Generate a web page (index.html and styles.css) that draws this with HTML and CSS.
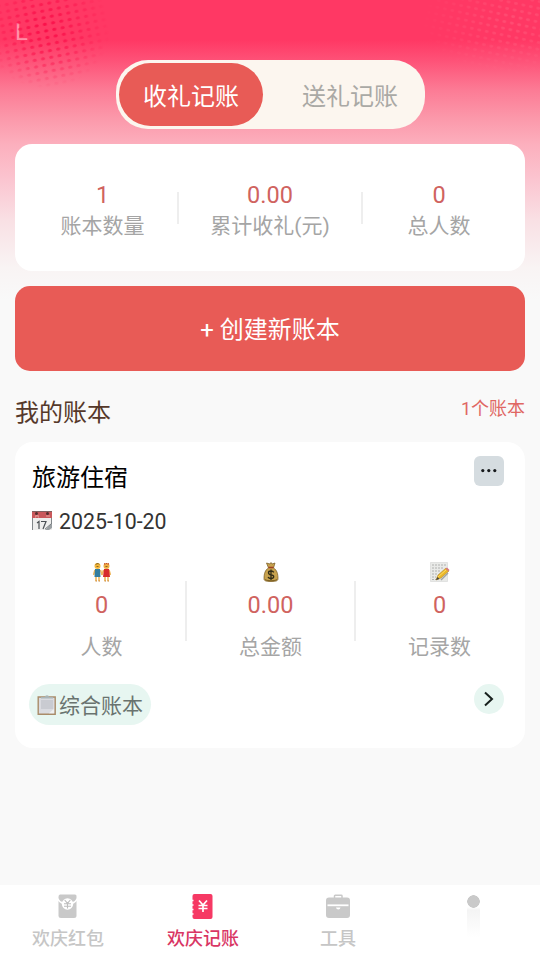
FILE: index.html
```
<!DOCTYPE html>
<html lang="zh-CN">
<head>
<meta charset="utf-8">
<title>欢庆记账</title>
<link rel="stylesheet" href="styles.css">
</head>
<body>
<div class="app">
  <svg class="halftone" width="540" height="110" aria-hidden="true">
    <defs>
      <pattern id="dots" width="8.4" height="6.7" patternUnits="userSpaceOnUse" patternTransform="translate(2 2) rotate(-11)"><ellipse cx="4.2" cy="3.3" rx="2.1" ry="1.6" fill="#fa0f49"/></pattern>
      <pattern id="lightDots" width="7.6" height="6.7" patternUnits="userSpaceOnUse" patternTransform="rotate(12)"><ellipse cx="3.8" cy="3.3" rx="2" ry="1.4" fill="#ff7791"/></pattern>
      <radialGradient id="fade"><stop offset="0" stop-color="#fff"/><stop offset=".35" stop-color="#fff" stop-opacity=".7"/><stop offset="1" stop-color="#fff" stop-opacity="0"/></radialGradient>
      <mask id="leftMask"><ellipse cx="46" cy="28" rx="64" ry="60" fill="url(#fade)"/></mask>
      <mask id="rightMask"><ellipse cx="515" cy="22" rx="95" ry="58" fill="url(#fade)"/></mask>
    </defs>
    <rect width="120" height="100" fill="url(#dots)" mask="url(#leftMask)"/>
    <rect x="400" width="140" height="90" fill="url(#lightDots)" opacity=".35" mask="url(#rightMask)"/>
  </svg>

  <header class="header"><span class="back">L</span></header>

  <main class="content">
    <nav class="switch">
      <span class="switch-item active">收礼记账</span>
      <span class="switch-item">送礼记账</span>
    </nav>

    <section class="summary">
      <div class="summary-item"><b class="num">1</b><span class="label">账本数量</span></div>
      <div class="summary-item"><b class="num">0.00</b><span class="label">累计收礼(元)</span></div>
      <div class="summary-item"><b class="num">0</b><span class="label">总人数</span></div>
    </section>

    <div class="create">+ 创建新账本</div>

    <div class="section-head"><h2>我的账本</h2><span class="count">1个账本</span></div>

    <article class="book">
      <div class="book-top">
        <h3>旅游住宿</h3>
        <span class="more"><svg width="30" height="30" viewBox="0 0 30 30" fill="#16191b"><circle cx="8.8" cy="14.6" r="1.6"/><circle cx="14.8" cy="14.6" r="1.6"/><circle cx="20.8" cy="14.6" r="1.6"/></svg></span>
      </div>
      <div class="date">
        <svg width="20" height="20" viewBox="0 0 20 20"><path fill="#eeeeed" d="M0 0h20v19H0z"/><path fill="#c9585b" d="M0 0h20v7H0z"/><path d="M0 .5h20" stroke="#806160"/><path d="M3 6h1V4h2v2h1M14 5h4" stroke="#e7a19d" fill="none"/><circle cx="4.500" cy="2.500" r="1.500" fill="#542c2d"/><circle cx="15.500" cy="2.500" r="1.500" fill="#542c2d"/><path d="M5 12l2-1.500V18M9 10.500h5l-3 7.500" fill="none" stroke="#4b5054" stroke-width="1.200"/><path d="M13 19l7-7v5l-3 2z" fill="#9a9fa2"/><path d="M13 18l6-5M.5 7v12M19.500 7v6" stroke="#666c70" stroke-width=".8"/></svg>
        <span>2025-10-20</span>
      </div>
      <div class="metrics">
        <div class="metric">
          <svg width="18" height="20" viewBox="0 0 18 20"><path d="M3 14v5M6 14v5M12 14v5M15 14v5M2 8L.5 13M7.500 8L9 13M10.500 8L9 13M16 8l1.500 5" stroke="#efb75b" stroke-width="1.600"/><circle cx="4.500" cy="4" r="3" fill="#f4b83d"/><circle cx="13.500" cy="4" r="3" fill="#f0b043"/><path d="M2 3q2.500-4 5 0l-2-1z" fill="#8c681f"/><path d="M11 2.500V1l1.500 1 1-1 1 1L16 1v1.500l-2.500-.5z" fill="#b52b20"/><path d="M2 7h5l.5 8h-6z" fill="#347e9f"/><path d="M11 7h5l1 8h-7z" fill="#d72b2a"/><path d="M3.500 4.500h2M12.500 4.500h2" stroke="#71501b" stroke-width=".8"/><path d="M2.500 19H4M5.500 19H7M11.500 19H13M14.500 19H16" stroke="#c98535"/></svg>
          <b class="num">0</b><span class="label">人数</span>
        </div>
        <div class="metric">
          <svg width="18" height="20" viewBox="0 0 18 20"><path d="M4.500 1l3.500 1 1-1.500 1 1.500 3-1-1.500 5c3.500 2 4.500 6 4.500 10.500 0 2-1 3-7 3s-7-1-7-3C2 12 3 8 6.500 6z" fill="#c7a24e" stroke="#75571e" stroke-width=".7"/><path d="M6.500 5.500h5" stroke="#9f3e22" stroke-width="1.500"/><path d="M3 17.500q1 1.200 6 1.200 5 0 6-1.200" stroke="#806324" fill="none"/><path d="M11.800 10.300Q11 9 9 9q-2.500 0-2.500 1.700T9 12.800q2.700.3 2.700 2T9 16.500q-2.200 0-3-1.500M9 7.500v10.500" fill="none" stroke="#302b15" stroke-width="1.300"/></svg>
          <b class="num">0.00</b><span class="label">总金额</span>
        </div>
        <div class="metric">
          <svg width="20" height="20" viewBox="0 0 20 20"><path fill="#e9eae8" stroke="#d3d5d3" stroke-width=".6" d="M.5.5h17v19H.5z"/><path d="M2 3h14M2 6h12M2 9h9M2 12h6M2 15h4M2 17.500h4" stroke="#a1a3a2" stroke-width=".8" stroke-dasharray="2 1"/><path d="M6 18l2-5 8-7 3 3-8 7z" fill="#e9b729" stroke="#a47626" stroke-width=".5"/><path d="M8 15l8-7" stroke="#ffdc64"/><path d="M15.500 6.500L17 5.500l2.500 2.500-1 1.500z" fill="#d67780"/><path d="M6 18l1.500-3 2 2z" fill="#45433d"/><path d="M11 18l7-7" stroke="#a1a4a2" stroke-width="1.500"/></svg>
          <b class="num">0</b><span class="label">记录数</span>
        </div>
      </div>
      <div class="book-foot">
        <span class="tag"><svg width="20" height="22" viewBox="0 0 20 22"><path fill="#dadbe0" stroke="#a98c69" stroke-width="1.400" d="M1.200 3h17v17.300h-17z"/><path fill="#c9cbd1" d="M4 6h12v9H4z"/><path fill="#eef0f0" d="M12 19.300l5-4.500v4.500z"/><path d="M4 4.500V3h4q0-1.800 2-1.800T12 3h4v1.500z" fill="#aab5b7"/></svg><span class="tag-text">综合账本</span></span>
        <span class="go"><svg width="30" height="30" viewBox="0 0 30 30" fill="none" stroke="#17201d" stroke-width="2"><path d="M11 8.500l7 6.500-7 6.500"/></svg></span>
      </div>
    </article>
  </main>

  <footer class="tabbar">
    <div class="tab">
      <svg width="28" height="28" viewBox="0 0 28 28"><path fill="#c9c9c9" d="M6 1.500h15q1.500 0 1.500 1.500v19.500q0 2.500-2.500 2.500H7q-2.500 0-2.500-2.500V4q0-2.500 1.500-2.500z"/><path d="M3.500 5.500q2 4 6 5M23.500 5.500q-2 4-6 5" fill="none" stroke="#fff" stroke-width="1.600"/><circle cx="13.500" cy="11" r="5.700" fill="#fff"/><path d="M10.700 7l2.800 3.300L16.300 7M10 10.800h7M10 13.200h7M13.500 10.500v5" fill="none" stroke="#bdbdbd" stroke-width="1.100"/></svg>
      <span>欢庆红包</span>
    </div>
    <div class="tab current">
      <svg width="28" height="28" viewBox="0 0 28 28"><path fill="#f63964" d="M5.500 1h16q2 0 2 2v21q0 2-2 2h-16q-2 0-2-2V3q0-2 2-2z"/><path d="M2.500 7.500h2M2.500 12h2M2.500 16.500h2M2.500 21h2" stroke="#fff" stroke-width="1.300"/><path d="M10 7.500l4 4.500 4-4.500M9.500 12.500h9M9.500 15.500h9M14 12v7" fill="none" stroke="#fff" stroke-width="1.700"/></svg>
      <span>欢庆记账</span>
    </div>
    <div class="tab">
      <svg width="28" height="28" viewBox="0 0 28 28"><path fill="none" stroke="#c9c9c9" stroke-width="1.500" d="M10.500 5V3q0-.7.700-.7h6.100q.7 0 .7.700v2"/><rect x="2" y="4.500" width="24" height="20.500" rx="3" fill="#c9c9c9"/><path d="M3.500 12.300h21" stroke="#fff" stroke-width="1.800"/><path d="M12 14.500h4.500q-.4 2-2.200 2-1.900 0-2.300-2z" fill="#fff"/></svg>
      <span>工具</span>
    </div>
    <div class="tab">
      <div class="profile"></div>
    </div>
  </footer>
</div>
</body>
</html>
```

FILE: styles.css
```
* { box-sizing: border-box; }
body {
  margin: 0;
  font-family: Roboto, "Noto Sans CJK SC", sans-serif;
  font-weight: 400;
}
svg { display: block; flex: none; }
.app {
  position: relative;
  width: 540px;
  height: 960px;
  display: flex;
  flex-direction: column;
  overflow: hidden;
  background: #f9f9f9 linear-gradient(#ff3864 0, #ff3864 40px, #fe5177 60px, #fc7b95 90px, #fb98aa 118px, #fcafbd 144px, #fbc5d0 180px, #f9e0e4 220px, #f9f4f4 268px, #f9f9f9 300px) no-repeat;
}
.halftone { position: absolute; left: 0; top: 0; }
.header { height: 60px; padding: 17px 0 0 15px; }
.back {
  display: block;
  font: 400 24px/30px Roboto, sans-serif;
  color: rgba(255, 255, 255, .45);
}
.content { position: relative; flex: 1; padding: 0 15px; }

.switch {
  display: flex;
  width: 309px;
  height: 69px;
  margin: 0 auto 15px 101px;
  padding: 3px;
  border-radius: 32px;
  background: #fcf6ef;
}
.switch-item {
  flex: 1;
  padding-left: 15px;
  text-align: center;
  font-size: 24px;
  line-height: 68px;
  color: #aaa9a5;
}
.switch-item.active {
  flex: 0 0 144px;
  height: 63px;
  padding: 0;
  border-radius: 32px;
  background: #e85b56;
  color: #fff;
}
.summary {
  display: grid;
  grid-template-columns: 151px 184px 149px;
  height: 127px;
  padding: 35px 12px 0 13px;
  border-radius: 17px;
  background: #fff;
}
.summary-item, .metric { display: flex; flex-direction: column; align-items: center; }
.summary-item { padding-right: 2px; }
.summary-item:last-child { padding: 0 0 0 3px; }
.num { font-size: 23.5px; font-weight: 400; line-height: 32px; color: #d0635f; }
.label { font-size: 21px; line-height: 30px; color: #a5a5a5; white-space: nowrap; }
.summary-item:not(:last-child) {
  background: linear-gradient(#eee, #eee) right 13px / 2px 32px no-repeat;
}
.create {
  height: 85px;
  margin-top: 15px;
  border-radius: 15px;
  background: #e85b56;
  color: #fff;
  font-size: 24px;
  line-height: 89px;
  text-align: center;
}
.section-head { display: flex; justify-content: space-between; height: 71px; padding-top: 24px; }
h2, h3 { margin: 0; font-size: 24px; font-weight: 400; line-height: 36px; }
h2 { color: #55382a; }
.count { font-size: 18px; line-height: 27px; color: #e06763; }

.book { height: 306px; padding-top: 14px; border-radius: 18px; background: #fff; }
.book-top { display: flex; justify-content: space-between; height: 40px; padding: 0 21px 0 17px; }
h3 { line-height: 44px; color: #000; }
.more { width: 30px; height: 30px; border-radius: 6px; background: #d5dce0; }
.date {
  display: flex;
  align-items: center;
  gap: 7px;
  height: 32px;
  margin: 9px 0 0 17px;
  font-size: 21.3px;
  color: #333;
}
.metrics {
  display: grid;
  grid-template-columns: repeat(3, 169px);
  margin: 25px 0 0 2px;
}
.metric { position: relative; }
.metric .num { margin-top: 7px; }
.metric .label { margin-top: 11px; }
.metric:not(:last-child)::after {
  content: "";
  position: absolute;
  right: -1px;
  top: 19px;
  width: 2px;
  height: 60px;
  background: #eee;
}
.book-foot { display: flex; justify-content: space-between; margin: 22px 21px 0 14px; }
.tag {
  display: flex;
  align-items: center;
  gap: 2px;
  width: 122px;
  height: 41px;
  padding-left: 8px;
  border-radius: 21px;
  background: #e7f6f1;
  color: #69736f;
  font-size: 21px;
  line-height: 41px;
  white-space: nowrap;
}
.tag-text { padding-top: 3px; }
.go { width: 30px; height: 30px; border-radius: 50%; background: #e7f6f1; }

.tabbar {
  display: grid;
  grid-template-columns: repeat(4, 135px);
  height: 75px;
  background: #fff;
}
.tab {
  display: flex;
  flex-direction: column;
  align-items: center;
  padding-top: 8px;
  color: #c6c6c6;
  font-size: 18px;
  font-weight: 500;
  line-height: 28px;
}
.tab svg { margin-left: 1px; }
.tab span { margin-top: 4px; padding-left: 1px; }
.tab.current { color: #d93664; }
.profile {
  width: 13px;
  height: 50px;
  margin: 2px 0 0 2px;
  background: radial-gradient(circle at 50% 6.5px, #c9c9c9 6px, transparent 6.5px), linear-gradient(#fff 12px, #f4f4f4 15px, #fff 42px);
}
```
